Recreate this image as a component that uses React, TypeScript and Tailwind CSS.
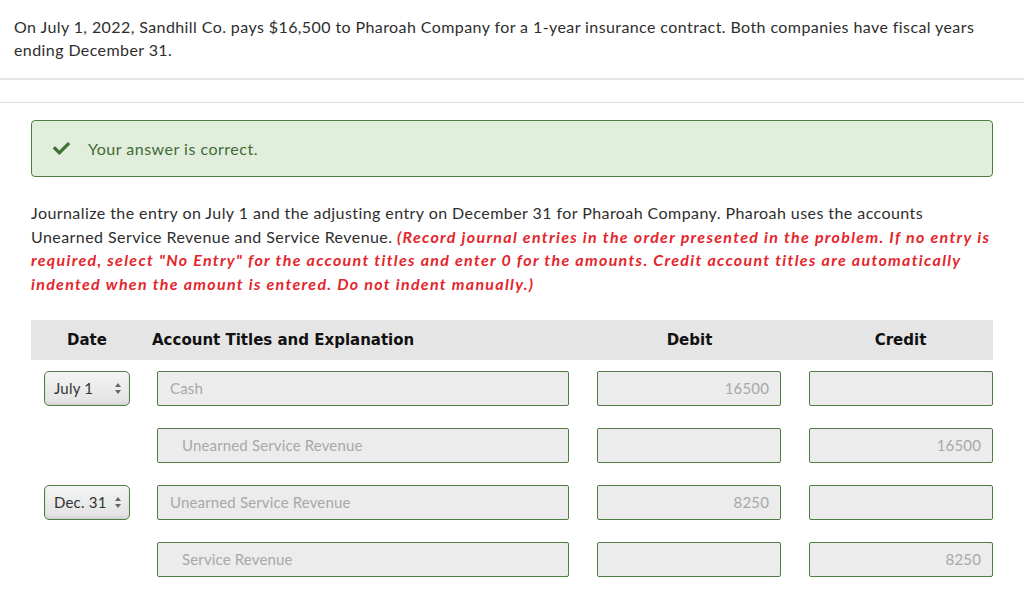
import React from 'react';
import { FaCheck } from 'react-icons/fa';

type Row = {
  date?: string;
  account: string;
  indent?: boolean;
  debit?: string;
  credit?: string;
};

const rows: Row[] = [
  { date: 'July 1', account: 'Cash', debit: '16500' },
  { account: 'Unearned Service Revenue', indent: true, credit: '16500' },
  { date: 'Dec. 31', account: 'Unearned Service Revenue', debit: '8250' },
  { account: 'Service Revenue', indent: true, credit: '8250' },
];

const inputCls =
  'h-[35px] border border-[#4f7d44] rounded-[2px] bg-[#ececec] flex items-center text-[15px] tracking-[0.15px] text-[#a8a8a8]';

const DateSelect = ({ label }: { label: string }) => (
  <div className="w-[86px] h-[35px] border border-[#4f7d44] rounded-[5px] bg-gradient-to-b from-[#f4f4f4] to-[#e2e2e2] shadow-[inset_0_-2px_3px_rgba(0,0,0,0.08)] flex items-center justify-between pl-[9px] pr-[8px] text-[15px] tracking-[0.2px] text-[#333]">
    <span>{label}</span>
    <svg width="6" height="11" viewBox="0 0 6 11">
      <path d="M3 0 L6 4 L0 4 Z" fill="#666" />
      <path d="M3 11 L6 7 L0 7 Z" fill="#666" />
    </svg>
  </div>
);

export default function App() {
  return (
    <div className="w-[1024px] min-h-[609px] bg-white font-['Lato','Noto_Sans',sans-serif] text-[#333]">
      <div className="px-[14px] pt-[15px] pb-[17px] text-[16px] leading-[23px] tracking-[0.41px] text-[#2e2e2e] border-b-2 border-[#e4e4e4]">
        On July 1, 2022, Sandhill Co. pays $16,500 to Pharoah Company for a 1-year insurance contract. Both companies have fiscal years
        <br />
        ending December 31.
      </div>
      <div className="h-[23px] border-b border-[#dedede]" />

      <div className="px-[31px] pr-[31px]">
        <div className="mt-[17px] h-[57px] border border-[#4f7d44] rounded-[4px] bg-[#e1eedb] flex items-center pl-[21px]">
          <FaCheck className="text-[#3f7336] w-[17px] h-[17px]" />
          <span className="ml-[18px] text-[16px] tracking-[0.5px] text-[#3f6b37]">Your answer is correct.</span>
        </div>

        <p className="mt-[24px] text-[16px] leading-[23.5px] tracking-[0.43px] text-[#2e2e2e]">
          Journalize the entry on July 1 and the adjusting entry on December 31 for Pharoah Company. Pharoah uses the accounts
          <br />
          Unearned Service Revenue and Service Revenue.{' '}
          <span className="text-[#e4262c] font-bold italic tracking-[1.3px]">
            (Record journal entries in the order presented in the problem. If no entry is
            <br />
            required, select "No Entry" for the account titles and enter 0 for the amounts. Credit account titles are automatically
            <br />
            indented when the amount is entered. Do not indent manually.)
          </span>
        </p>

        <div className="mt-[25px] w-[962px]">
          <div className="h-[40px] bg-[#e5e5e5] flex items-center text-[15px] font-bold text-[#111] font-['DejaVu_Sans',sans-serif]">
            <div className="w-[112px] text-center">Date</div>
            <div className="w-[455px] pl-[9px]">Account Titles and Explanation</div>
            <div className="w-[200px] text-center pr-[17px]">Debit</div>
            <div className="w-[195px] text-center pl-[10px]">Credit</div>
          </div>

          <div className="pt-[11px] flex flex-col gap-[22px]">
            {rows.map((r, i) => (
              <div key={i} className="flex items-center">
                <div className="w-[126px] pl-[13px]">
                  {r.date && <DateSelect label={r.date} />}
                </div>
                <div className={`${inputCls} w-[412px] ${r.indent ? 'pl-[24px]' : 'pl-[12px]'}`}>
                  {r.account}
                </div>
                <div className={`${inputCls} w-[184px] ml-[28px] justify-end pr-[11px]`}>{r.debit}</div>
                <div className={`${inputCls} w-[184px] ml-[28px] justify-end pr-[11px]`}>{r.credit}</div>
              </div>
            ))}
          </div>
        </div>
      </div>
    </div>
  );
}
